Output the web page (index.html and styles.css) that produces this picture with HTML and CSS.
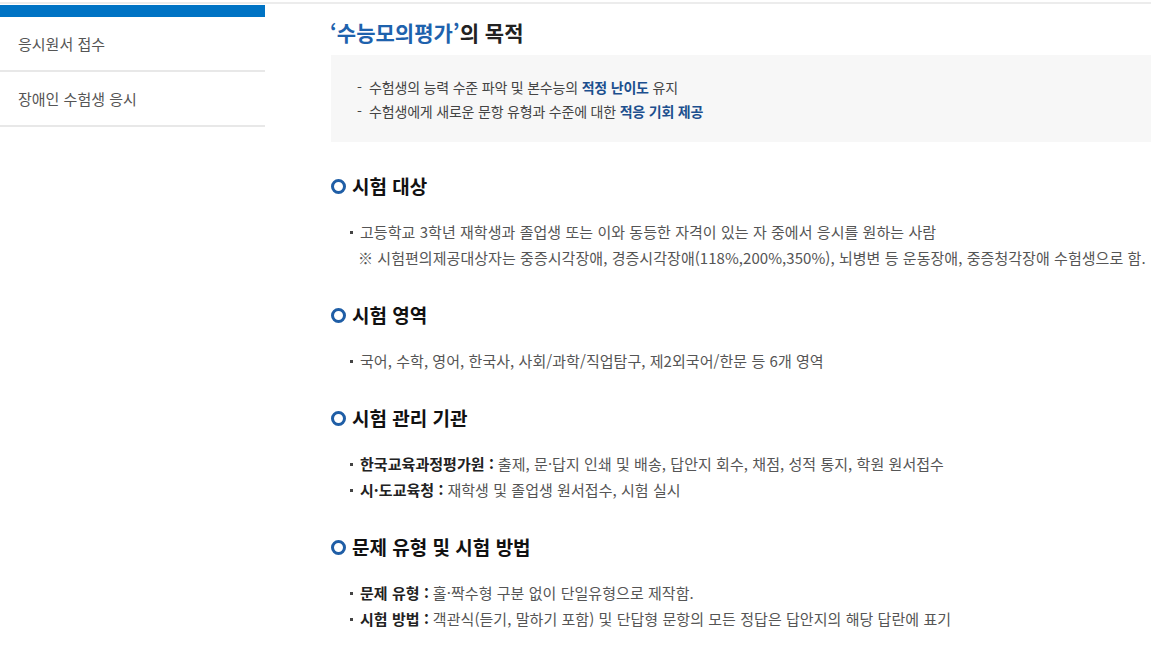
FILE: index.html
```html
<!DOCTYPE html>
<html lang="ko">
<head>
<meta charset="utf-8">
<link rel="stylesheet" href="styles.css">
</head>
<body>
<div class="topline"></div>
<div class="page">
  <aside class="sidebar">
    <div class="side-bar"></div>
    <a class="side-item">응시원서 접수</a>
    <a class="side-item">장애인 수험생 응시</a>
  </aside>
  <main class="content">
    <h2 class="title"><span class="blue">‘수능모의평가’</span>의 목적</h2>
    <div class="purpose">
      <p>-&nbsp; 수험생의 능력 수준 파악 및 본수능의 <strong>적정 난이도</strong> 유지</p>
      <p>-&nbsp; 수험생에게 새로운 문항 유형과 수준에 대한 <strong>적응 기회 제공</strong></p>
    </div>

    <section class="sec">
      <h3 class="sec-title"><span class="ring"></span>시험 대상</h3>
      <ul class="list">
        <li><span class="dot"></span>고등학교 3학년 재학생과 졸업생 또는 이와 동등한 자격이 있는 자 중에서 응시를 원하는 사람</li>
        <li class="note">※ 시험편의제공대상자는 중증시각장애, 경증시각장애(118%,200%,350%), 뇌병변 등 운동장애, 중증청각장애 수험생으로 함.</li>
      </ul>
    </section>

    <section class="sec">
      <h3 class="sec-title"><span class="ring"></span>시험 영역</h3>
      <ul class="list">
        <li><span class="dot"></span>국어, 수학, 영어, 한국사, 사회/과학/직업탐구, 제2외국어/한문 등 6개 영역</li>
      </ul>
    </section>

    <section class="sec">
      <h3 class="sec-title"><span class="ring"></span>시험 관리 기관</h3>
      <ul class="list">
        <li><span class="dot"></span><b>한국교육과정평가원 :</b> 출제, 문·답지 인쇄 및 배송, 답안지 회수, 채점, 성적 통지, 학원 원서접수</li>
        <li><span class="dot"></span><b>시·도교육청 :</b> 재학생 및 졸업생 원서접수, 시험 실시</li>
      </ul>
    </section>

    <section class="sec">
      <h3 class="sec-title"><span class="ring"></span>문제 유형 및 시험 방법</h3>
      <ul class="list">
        <li><span class="dot"></span><b>문제 유형 :</b> 홀·짝수형 구분 없이 단일유형으로 제작함.</li>
        <li><span class="dot"></span><b>시험 방법 :</b> 객관식(듣기, 말하기 포함) 및 단답형 문항의 모든 정답은 답안지의 해당 답란에 표기</li>
      </ul>
    </section>
  </main>
</div>
</body>
</html>
```

FILE: styles.css
```css
* { box-sizing: border-box; }
html, body {
  margin: 0;
  padding: 0;
  background: #fff;
  overflow: hidden;
}
body {
  font-family: "Noto Sans CJK KR", "Noto Sans", sans-serif;
  color: #555;
  width: 1151px;
  height: 648px;
}
.topline {
  height: 2px;
  margin-top: 2px;
  background: #ececec;
}
.page {
  display: flex;
  align-items: flex-start;
}
.sidebar {
  width: 265px;
  flex: none;
  margin-top: 1px;
}
.side-bar {
  height: 12px;
  background: #0073c4;
}
.side-item {
  display: block;
  height: 55px;
  line-height: 54px;
  padding-left: 18px;
  font-size: 15px;
  color: #555;
  border-bottom: 2px solid #e8e8e8;
}
.content {
  flex: 1;
  margin-left: 65px;
  padding-top: 13px;
  min-width: 0;
}
.title {
  margin: 0;
  font-size: 21px;
  line-height: 30px;
  font-weight: 700;
  color: #222;
}
.title .blue { color: #1e62ad; }
.purpose {
  margin-top: 8px;
  margin-left: 1px;
  background: #f7f7f7;
  padding: 20px 0 19px 26px;
  height: 87px;
}
.purpose p {
  margin: 0;
  font-size: 14px;
  line-height: 24px;
  color: #444;
  letter-spacing: -0.2px;
}
.purpose strong {
  color: #1c4f8e;
  font-weight: 700;
}
.sec { margin-top: 31px; }
.sec-title {
  margin: 0;
  display: flex;
  align-items: center;
  font-size: 19px;
  line-height: 26px;
  font-weight: 700;
  color: #111;
}
.ring {
  width: 15px;
  height: 15px;
  border: 3.5px solid #1f5ea6;
  border-radius: 50%;
  margin: 0 6px 0 1px;
  flex: none;
}
.list {
  list-style: none;
  margin: 20px 0 0;
  padding: 0 0 0 20px;
}
.list li {
  font-size: 15px;
  line-height: 26px;
  color: #555;
  white-space: nowrap;
  display: flex;
  align-items: center;
  letter-spacing: 0.05px;
}
.list li b { color: #222; font-weight: 700; margin-right: 4px; }
.dot {
  width: 3px;
  height: 3px;
  background: #444;
  margin-right: 7px;
  flex: none;
}
.list li.note { padding-left: 8px; }
```
